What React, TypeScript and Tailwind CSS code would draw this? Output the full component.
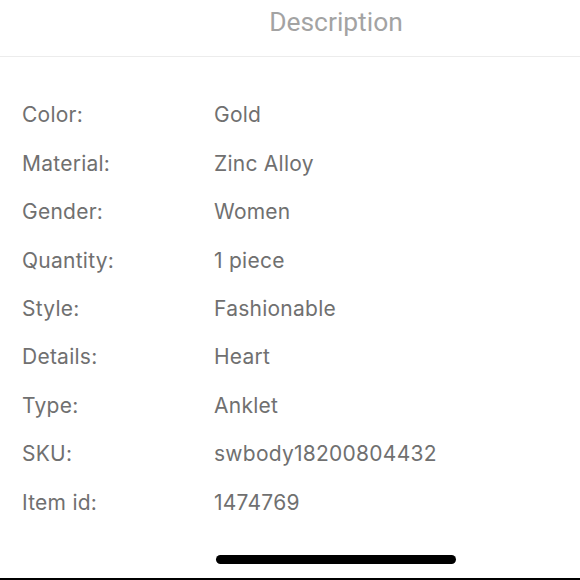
const specs: [string, string][] = [
  ['Color:', 'Gold'],
  ['Material:', 'Zinc Alloy'],
  ['Gender:', 'Women'],
  ['Quantity:', '1 piece'],
  ['Style:', 'Fashionable'],
  ['Details:', 'Heart'],
  ['Type:', 'Anklet'],
  ['SKU:', 'swbody18200804432'],
  ['Item id:', '1474769'],
]

export default function App() {
  return (
    <div className="w-[580px] h-[580px] bg-white flex flex-col overflow-hidden font-['Inter',sans-serif]">
      <header className="h-[57px] shrink-0 flex items-center justify-center border-b border-[#ececec] pl-[92px]">
        <h1 className="text-[26.4px] text-[#a3a3a3] font-['Roboto',sans-serif] pb-[11px]">Description</h1>
      </header>

      <div className="flex flex-col pt-[34px]">
        {specs.map(([label, value]) => (
          <div key={label} className="h-[48.4px] flex items-center text-[21px] tracking-[0.25px] text-[#707070]">
            <span className="w-[214px] pl-[22px]">{label}</span>
            <span>{value}</span>
          </div>
        ))}
      </div>

      <div className="flex-1 flex flex-col justify-end">
        <div className="flex justify-center pb-[14px] pl-[92px]">
          <div className="w-[240px] h-[9px] rounded-full bg-black" />
        </div>
        <div className="h-[2px] bg-black" />
      </div>
    </div>
  )
}
